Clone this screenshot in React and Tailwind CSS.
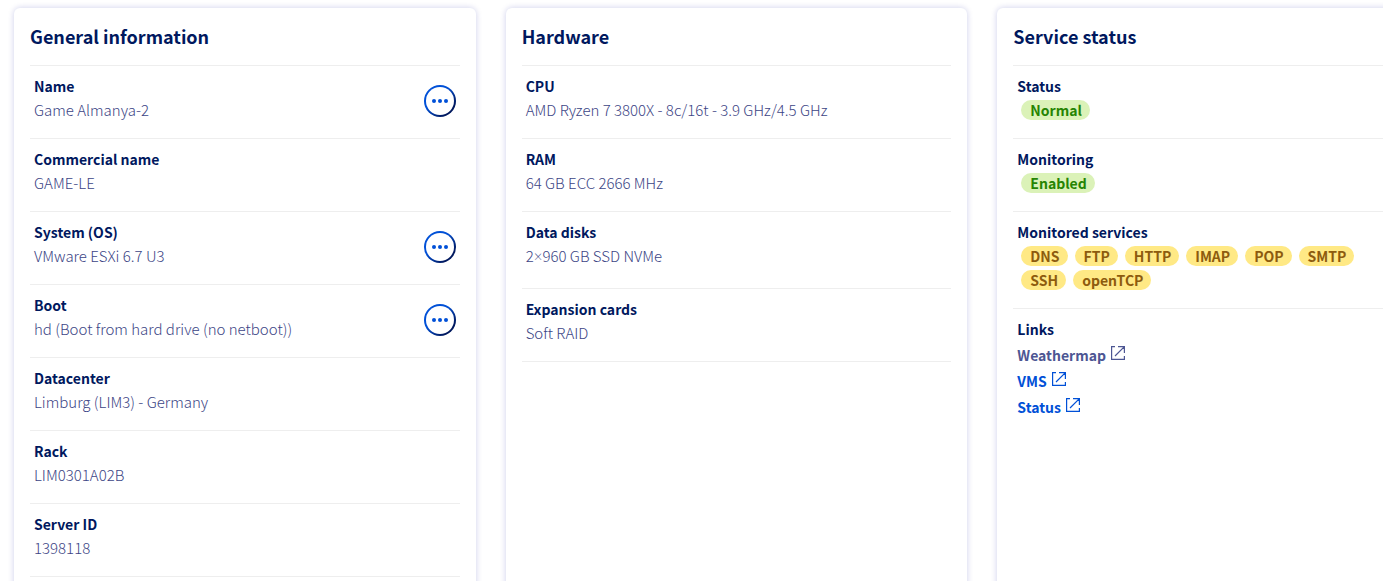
const generalInfo = [
  { label: 'Name',            value: 'Game Almanya-2', menu: true },
  { label: 'Commercial name', value: 'GAME-LE' },
  { label: 'System (OS)',     value: 'VMware ESXi 6.7 U3', menu: true },
  { label: 'Boot',            value: 'hd (Boot from hard drive (no netboot))', menu: true },
  { label: 'Datacenter',      value: 'Limburg (LIM3) - Germany' },
  { label: 'Rack',            value: 'LIM0301A02B' },
  { label: 'Server ID',       value: '1398118' },
];

const services = ['DNS', 'FTP', 'HTTP', 'IMAP', 'POP', 'SMTP', 'SSH', 'openTCP'];

const links = [
  { label: 'Weathermap', color: 'text-[#4d5693]' },
  { label: 'VMS',        color: 'text-[#0050d7]' },
  { label: 'Status',     color: 'text-[#0050d7]' },
];

function Card({ title, children }) {
  return (
    <section className="bg-white rounded-md px-4 pb-4 shadow-[0_0_6px_rgba(0,14,156,0.2)]">
      <h2 className="h-[57px] pt-[15px] text-lg leading-[26px] font-bold text-[#00185e]">{title}</h2>
      <dl>{children}</dl>
    </section>
  );
}

function ActionsButton({ label }) {
  return (
    <button
      type="button"
      aria-label={`${label} actions`}
      className="w-8 h-8 mt-[11px] shrink-0 rounded-full p-0.5 bg-linear-to-br from-[#0050d7] from-40% to-[#00185e] to-80% cursor-pointer"
    >
      <span className="w-full h-full rounded-full bg-white flex items-center justify-center gap-0.5">
        <span className="w-1 h-1 rounded-full bg-[#0050d7]" />
        <span className="w-1 h-1 rounded-full bg-[#0050d7]" />
        <span className="w-1 h-1 rounded-full bg-[#0050d7]" />
      </span>
    </button>
  );
}

function Row({ label, menu, last, tall, children }) {
  return (
    <div className={`flex items-start justify-between border-t border-[#eeeeee] px-1 pt-2 ${tall ? 'pb-5' : 'pb-4'} ${last ? 'border-b' : ''}`}>
      <div className="min-w-0">
        <dt className="text-sm leading-6 font-bold text-[#00185e]">{label}</dt>
        <dd className="font-light text-[#3c4585]">{children}</dd>
      </div>
      {menu && <ActionsButton label={label} />}
    </div>
  );
}

function Badge({ color, children }) {
  return (
    <span className={`h-5 rounded-full pl-[9px] pr-2 text-sm leading-5 font-bold ${color}`}>{children}</span>
  );
}

function Badges({ children }) {
  return <span className="flex flex-wrap gap-x-[7px] gap-y-1 pl-1 pr-16 py-0.5">{children}</span>;
}

function ExternalIcon() {
  return (
    <svg viewBox="0 0 14 14" className="w-3.5 h-3.5 mb-1" fill="none" stroke="currentColor" strokeWidth="1.2" aria-hidden="true">
      <path d="M4 .6H.6v12.8h12.8V10M7 .6h6.4V7M13.4.6 4 10" />
    </svg>
  );
}

export default function App() {
  return (
    <main className="h-screen overflow-hidden bg-white pt-2 text-[15px] leading-6 font-['Noto_Sans_CJK_SC','Noto_Sans',sans-serif]">
      {/* The third column runs past the right edge */}
      <div className="grid grid-cols-3 gap-[30px] px-3.5 w-[calc(100%+90px)]">
        <Card title="General information">
          {generalInfo.map((item, i) => (
            <Row key={item.label} label={item.label} menu={item.menu} last={i === generalInfo.length - 1}>
              {item.value}
            </Row>
          ))}
        </Card>

        <Card title="Hardware">
          <Row label="CPU">AMD Ryzen 7 3800X - 8c/16t - 3.9 GHz/4.5 GHz</Row>
          <Row label="RAM">64 GB ECC 2666 MHz</Row>
          <Row label="Data disks" tall>
            2<span className="font-['Lato',sans-serif] leading-none">×</span>960 GB SSD NVMe
          </Row>
          <Row label="Expansion cards" last>Soft RAID</Row>
        </Card>

        <Card title="Service status">
          <Row label="Status">
            <Badges><Badge color="bg-[#dbf2b8] text-[#268403]">Normal</Badge></Badges>
          </Row>
          <Row label="Monitoring">
            <Badges><Badge color="bg-[#dbf2b8] text-[#268403]">Enabled</Badge></Badges>
          </Row>
          <Row label="Monitored services">
            <Badges>
              {services.map((name) => (
                <Badge key={name} color="bg-[#ffe985] text-[#8d5b0e]">{name}</Badge>
              ))}
            </Badges>
          </Row>
          <Row label="Links">
            <div className="pt-px">
              {links.map((link) => (
                <a key={link.label} href="#" className={`flex w-fit items-center gap-[5px] text-sm leading-[26px] font-bold ${link.color}`}>
                  {link.label}
                  <ExternalIcon />
                </a>
              ))}
            </div>
          </Row>
        </Card>
      </div>
    </main>
  );
}
